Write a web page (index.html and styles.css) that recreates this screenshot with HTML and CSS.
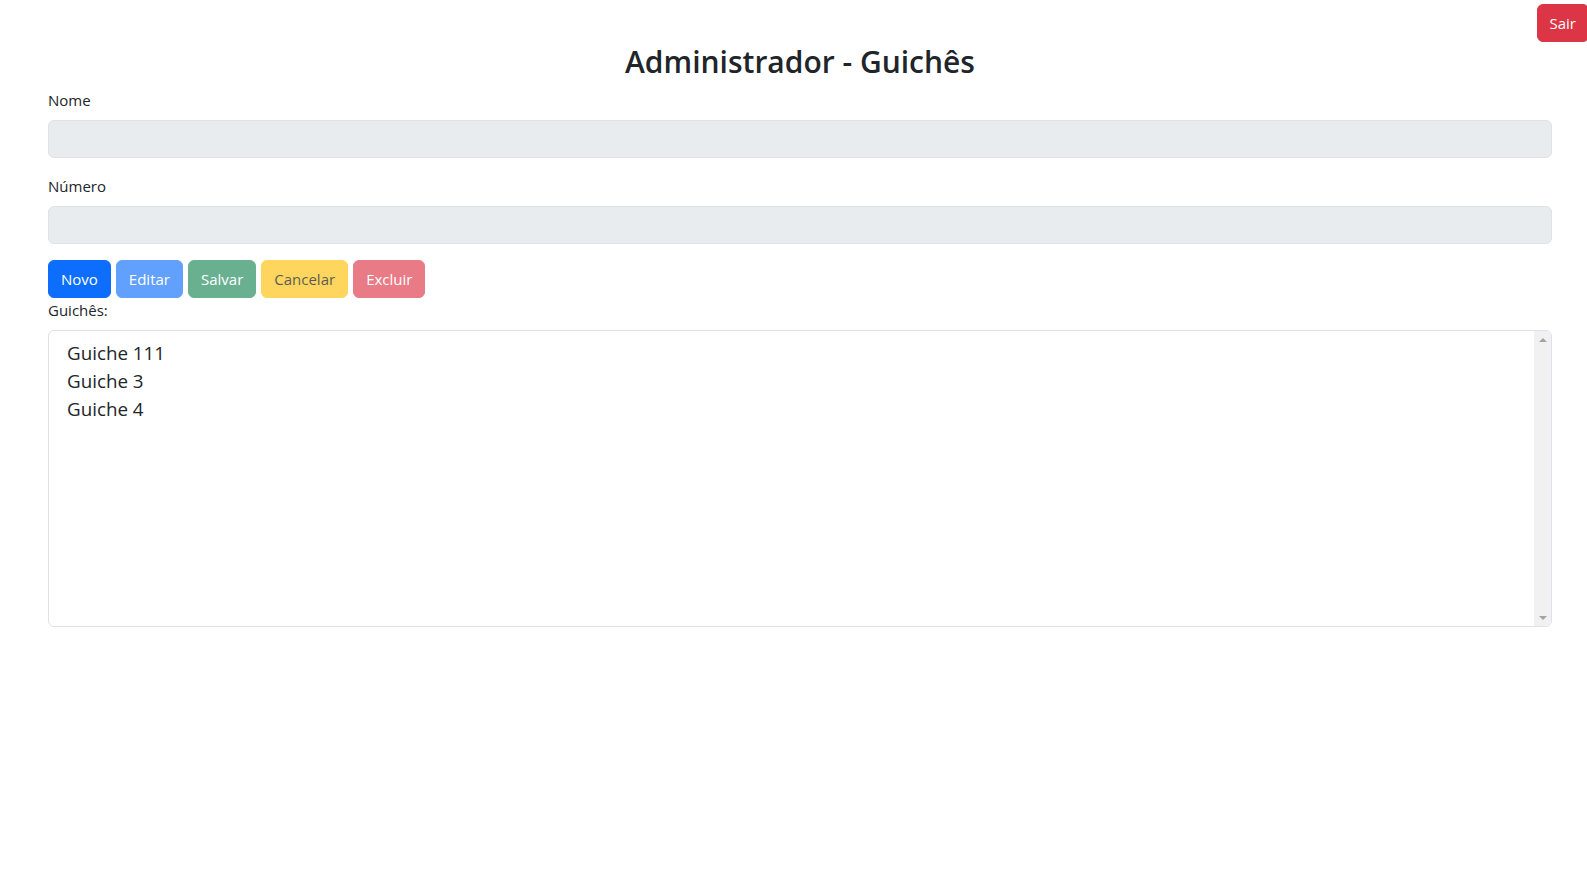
FILE: index.html
```html
<!DOCTYPE html>
<html lang="pt-BR">
<head>
<meta charset="utf-8">
<title>Administrador - Guichês</title>
<link rel="stylesheet" href="styles.css">
</head>
<body>
<header class="topbar">
  <button class="btn btn-danger btn-sair" type="button">Sair</button>
</header>
<main class="container">
  <h2 class="title">Administrador - Guichês</h2>
  <div class="field">
    <label class="form-label" for="nome">Nome</label>
    <input class="form-control" id="nome" type="text" disabled>
  </div>
  <div class="field">
    <label class="form-label" for="numero">Número</label>
    <input class="form-control" id="numero" type="text" disabled>
  </div>
  <div class="actions">
    <button class="btn btn-primary" type="button">Novo</button>
    <button class="btn btn-primary" type="button" disabled>Editar</button>
    <button class="btn btn-success" type="button" disabled>Salvar</button>
    <button class="btn btn-warning" type="button" disabled>Cancelar</button>
    <button class="btn btn-danger" type="button" disabled>Excluir</button>
  </div>
  <label class="list-label">Guichês:</label>
  <div class="listbox">
    <ul class="options">
      <li>Guiche 111</li>
      <li>Guiche 3</li>
      <li>Guiche 4</li>
    </ul>
    <div class="scrollbar">
      <span class="arrow arrow-up"></span>
      <span class="arrow arrow-down"></span>
    </div>
  </div>
</main>
</body>
</html>
```
FILE: styles.css
```css
* { box-sizing: border-box; }

html, body {
  margin: 0;
  padding: 0;
  background: #fff;
  overflow-x: hidden;
}

body {
  font-family: "Open Sans", "Noto Sans", sans-serif;
  font-size: 15px;
  line-height: 24px;
  color: #212529;
}

.topbar {
  display: flex;
  justify-content: flex-end;
  padding-top: 4px;
  margin-right: -2px;
}

.container {
  padding: 0 35px 0 48px;
}

.title {
  margin: 0 0 8px;
  padding-top: 1px;
  height: 38.4px;
  font-size: 30px;
  font-weight: 600;
  line-height: 38.4px;
  text-align: center;
}

.field {
  margin-bottom: 16px;
}

.form-label {
  display: block;
  margin-bottom: 8px;
}

.form-control {
  display: block;
  width: 100%;
  height: 38px;
  padding: 6px 12px;
  font: inherit;
  border: 1px solid #dee2e6;
  border-radius: 6px;
  background: #e9ecef;
}

.actions {
  display: flex;
  gap: 5px;
}

.btn {
  display: inline-block;
  height: 38px;
  padding: 6px 12px;
  font-family: inherit;
  font-size: 15px;
  line-height: 24px;
  border: 1px solid transparent;
  border-radius: 6px;
  color: #fff;
  cursor: pointer;
}

.btn:disabled { opacity: .65; cursor: default; }

.btn-primary { background: #0d6efd; border-color: #0d6efd; }
.btn-success { background: #198754; border-color: #198754; }
.btn-warning { background: #ffc107; border-color: #ffc107; color: #000; }
.btn-danger  { background: #dc3545; border-color: #dc3545; }

.list-label {
  display: block;
  margin-bottom: 8px;
}

.listbox {
  display: flex;
  height: 297px;
  border: 1px solid #dee2e6;
  border-radius: 6px;
  overflow: hidden;
}

.options {
  flex: 1;
  list-style: none;
  margin: 0;
  padding: 9px 16px 8px;
  font-size: 18.8px;
  line-height: 27.7px;
}

.options li {
  padding: 0 2px;
}

.scrollbar {
  width: 17px;
  background: #f1f1f1;
  display: flex;
  flex-direction: column;
  justify-content: space-between;
  align-items: center;
  padding: 7px 0 6px;
}

.arrow {
  width: 0;
  height: 0;
  border-left: 4px solid transparent;
  border-right: 4px solid transparent;
}

.arrow-up { border-bottom: 4px solid #a3a3a3; }
.arrow-down { border-top: 4px solid #a3a3a3; }
```
